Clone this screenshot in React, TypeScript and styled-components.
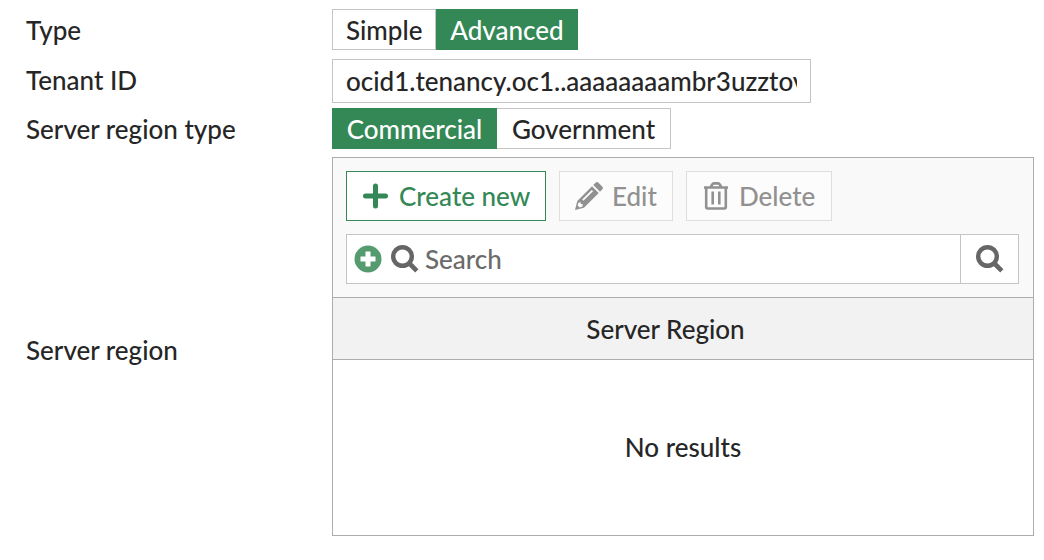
import React, { useState } from "react";
import styled, { createGlobalStyle } from "styled-components";

const GlobalStyle = createGlobalStyle`
  *, *::before, *::after { box-sizing: border-box; }
  body {
    margin: 0;
    background: #ffffff;
    color: #262626;
    font: 500 26px/32px Lato, "Liberation Sans", sans-serif;
  }
  button, input { font: inherit; color: inherit; }
`;

const green = "#338855";
const controlBorder = "#c4c4c4";
const panelBorder = "#adadad";

const Form = styled.form`
  display: grid;
  grid-template-columns: 306px minmax(0, 1fr);
  grid-template-rows: minmax(50px, auto) minmax(49px, auto) minmax(49px, auto) auto;
  align-items: start;
  padding: 9px 10px 24px 26px;
`;

const FieldLabel = styled.label`
  padding-top: 5px;
`;

const PanelLabel = styled.span`
  align-self: center;
  padding-top: 7px;
`;

const Segments = styled.div`
  display: flex;
`;

const Segment = styled.label<{ $minWidth: number }>`
  display: flex;
  align-items: center;
  justify-content: center;
  min-width: ${({ $minWidth }) => $minWidth}px;
  height: 41px;
  padding: 0 13px;
  border: 1px solid ${controlBorder};
  background: #ffffff;
  cursor: pointer;

  & + & { border-left: 0; }

  &:has(input:checked) {
    border-color: ${green};
    background: ${green};
    color: #ffffff;
  }

  input {
    appearance: none;
    width: 0;
    height: 0;
    margin: 0;
  }
`;

const TextInput = styled.input`
  width: 100%;
  max-width: 479px;
  height: 44px;
  padding: 0 13px;
  border: 1px solid ${controlBorder};
  border-radius: 0;
  background: #ffffff;
  outline: 0;
`;

const Panel = styled.section`
  border: 1px solid ${panelBorder};
`;

const PanelTop = styled.div`
  display: grid;
  gap: 13px;
  padding: 13px 14px 13px 13px;
  background: #f9f9f9;
`;

const Toolbar = styled.div`
  display: flex;
  flex-wrap: wrap;
  gap: 13px;
`;

const ToolButton = styled.button<{ $minWidth: number }>`
  display: flex;
  align-items: center;
  gap: 9px;
  min-width: ${({ $minWidth }) => $minWidth}px;
  height: 50px;
  padding: 0 13px 0 15px;
  border: 1px solid ${green};
  background: #ffffff;
  color: ${green};
  cursor: pointer;

  &:disabled {
    border-color: #dedede;
    background: #fcfcfc;
    color: #919191;
    cursor: default;
  }
`;

const SearchBar = styled.div`
  display: flex;
  height: 50px;
  border: 1px solid ${controlBorder};
  background: #ffffff;
  color: #666666;
`;

const AddFilter = styled.button`
  display: flex;
  align-items: center;
  padding: 0 9px 0 7px;
  border: 0;
  background: none;
  color: #559b6f;
`;

const SearchField = styled.label`
  display: flex;
  flex: 1;
  align-items: center;
  gap: 6px;
  min-width: 0;
`;

const SearchInput = styled.input`
  flex: 1;
  min-width: 0;
  padding: 0;
  border: 0;
  background: none;
  outline: 0;

  &::placeholder { color: #6b6b6b; opacity: 1; }
`;

const SearchButton = styled.button`
  display: flex;
  align-items: center;
  justify-content: center;
  width: 58px;
  padding: 0;
  border: 0;
  border-left: 1px solid ${controlBorder};
  background: none;
`;

const RegionTable = styled.table`
  width: 100%;
  border-collapse: collapse;

  th {
    height: 62px;
    padding: 0 35px 0 0;
    border-top: 1px solid ${panelBorder};
    border-bottom: 1px solid ${panelBorder};
    background: #f2f2f2;
    font-weight: inherit;
  }

  td {
    height: 175px;
    padding: 0;
    text-align: center;
  }
`;

const Icon = styled.svg.attrs({ viewBox: "0 0 28 28", "aria-hidden": true })`
  flex: none;
  width: 28px;
  height: 28px;
  fill: currentColor;
`;

const PlusIcon = () => (
  <Icon>
    <path d="M3.500 14H23.500M13.500 4V24" fill="none" stroke="currentColor" strokeWidth="5" strokeLinecap="round" />
  </Icon>
);

const PencilIcon = () => (
  <Icon>
    <path
      fillRule="evenodd"
      d="M20.500 .8Q22 -.6 23.500 .8L27.200 4.500Q28.600 6 27.200 7.500L25 9.700 18.300 3ZM17 4.300 23.700 11 9 25.700 0 28 2.300 19ZM3.600 20.400 2.600 23.400 4.600 25.400 7.600 24.400V22H5.800V20.400ZM7.200 17.600 8.400 18.800 18 9.200 16.800 8Z"
    />
  </Icon>
);

const TrashIcon = () => (
  <Icon>
    <g fill="none" stroke="currentColor" strokeWidth="2.600">
      <path d="M2 5.500H26M4.200 5.500V25Q4.200 26.500 5.700 26.500H22.300Q23.800 26.500 23.800 25V5.500M8.500 5.500 10.300 2.300Q10.800 1.400 11.800 1.400H16.200Q17.200 1.400 17.700 2.300L19.500 5.500" />
      <path d="M10.700 9.500V22.500M17.300 9.500V22.500" />
    </g>
  </Icon>
);

const AddCircleIcon = () => (
  <Icon>
    <path
      fillRule="evenodd"
      d="M14 .5A13.500 13.500 0 1 1 14 27.500 13.500 13.500 0 1 1 14 .5ZM11.500 6.500V11.500H6.500V16.500H11.500V21.500H16.500V16.500H21.500V11.500H16.500V6.500Z"
    />
  </Icon>
);

const MagnifierIcon = () => (
  <Icon>
    <circle cx="11.500" cy="11.500" r="9.300" fill="none" stroke="currentColor" strokeWidth="4.400" />
    <path d="M18.500 18.500 25.800 25.800" fill="none" stroke="currentColor" strokeWidth="4.600" />
  </Icon>
);

type Option = { text: string; minWidth: number };

type ChoiceProps = {
  name: string;
  label: string;
  options: Option[];
  initial: string;
};

const typeOptions: Option[] = [
  { text: "Simple", minWidth: 104 },
  { text: "Advanced", minWidth: 142 },
];

const regionTypeOptions: Option[] = [
  { text: "Commercial", minWidth: 165 },
  { text: "Government", minWidth: 174 },
];

const Choice = ({ name, label, options, initial }: ChoiceProps) => {
  const [value, setValue] = useState(initial);
  return (
    <Segments role="radiogroup" aria-label={label}>
      {options.map(({ text, minWidth }) => (
        <Segment key={text} $minWidth={minWidth}>
          <input
            type="radio"
            name={name}
            checked={value === text}
            onChange={() => setValue(text)}
          />
          {text}
        </Segment>
      ))}
    </Segments>
  );
};

export default function App() {
  const [tenant, setTenant] = useState("ocid1.tenancy.oc1..aaaaaaaambr3uzztovweq");
  return (
    <>
      <GlobalStyle />
      <Form onSubmit={(event) => event.preventDefault()}>
        <FieldLabel as="span">Type</FieldLabel>
        <Choice name="type" label="Type" options={typeOptions} initial="Advanced" />

        <FieldLabel htmlFor="tenant">Tenant ID</FieldLabel>
        <TextInput id="tenant" value={tenant} onChange={(event) => setTenant(event.target.value)} />

        <FieldLabel as="span">Server region type</FieldLabel>
        <Choice
          name="region-type"
          label="Server region type"
          options={regionTypeOptions}
          initial="Commercial"
        />

        <PanelLabel id="region-label">Server region</PanelLabel>
        <Panel aria-labelledby="region-label">
          <PanelTop>
            <Toolbar>
              <ToolButton type="button" $minWidth={200}>
                <PlusIcon />
                Create new
              </ToolButton>
              <ToolButton type="button" $minWidth={114} disabled>
                <PencilIcon />
                Edit
              </ToolButton>
              <ToolButton type="button" $minWidth={146} disabled>
                <TrashIcon />
                Delete
              </ToolButton>
            </Toolbar>
            <SearchBar>
              <AddFilter type="button" aria-label="Add filter">
                <AddCircleIcon />
              </AddFilter>
              <SearchField>
                <MagnifierIcon />
                <SearchInput type="text" placeholder="Search" aria-label="Search" />
              </SearchField>
              <SearchButton type="submit" aria-label="Search">
                <MagnifierIcon />
              </SearchButton>
            </SearchBar>
          </PanelTop>
          <RegionTable>
            <thead>
              <tr>
                <th scope="col">Server Region</th>
              </tr>
            </thead>
            <tbody>
              <tr>
                <td>No results</td>
              </tr>
            </tbody>
          </RegionTable>
        </Panel>
      </Form>
    </>
  );
}
